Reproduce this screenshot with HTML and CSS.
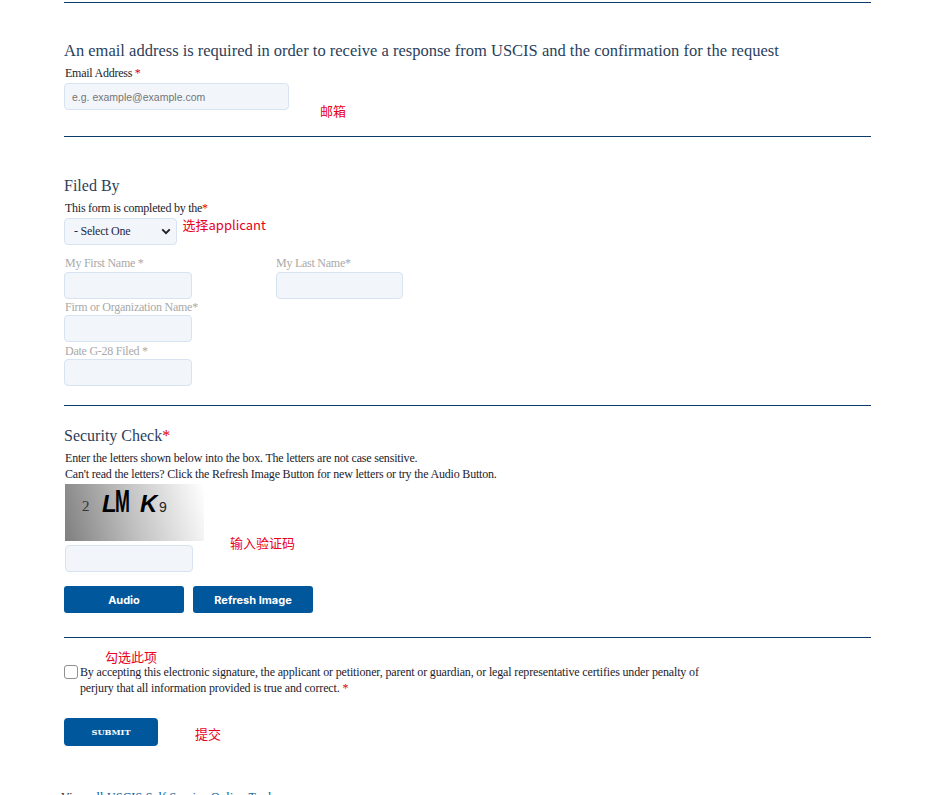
FILE: index.html
```html
<!DOCTYPE html>
<html lang="en">
<head>
<meta charset="utf-8">
<title>USCIS request form</title>
<link rel="stylesheet" href="styles.css">
</head>
<body>
<main class="page">
  <section class="sec sec-email">
    <h2 class="title title-email">An email address is required in order to receive a response from USCIS and the confirmation for the request</h2>
    <label class="lbl lbl-dark">Email Address <span class="req">*</span></label>
    <input class="field field-email" type="text" placeholder="e.g. example@example.com">
    <span class="note note-email">邮箱</span>
  </section>

  <section class="sec sec-filed">
    <h2 class="title">Filed By</h2>
    <label class="lbl lbl-dark lbl-by">This form is completed by the<span class="req">*</span></label>
    <div class="select-box"><span>- Select One</span>
      <svg class="chev" width="10" height="7" viewBox="0 0 12 8"><path d="M1.5 1.5 6 6l4.500-4.500" fill="none" stroke="#222" stroke-width="2.400"/></svg>
    </div>
    <span class="note note-select">选择applicant</span>
    <div class="name-row">
      <div class="col"><label class="lbl lbl-muted">My First Name *</label><div class="field field-sm"></div></div>
      <div class="col"><label class="lbl lbl-muted lbl-last">My Last Name*</label><div class="field field-last"></div></div>
    </div>
    <label class="lbl lbl-muted">Firm or Organization Name*</label>
    <div class="field field-sm"></div>
    <label class="lbl lbl-muted lbl-gap">Date G-28 Filed *</label>
    <div class="field field-sm"></div>
  </section>

  <section class="sec sec-check">
    <h2 class="title">Security Check<span class="req">*</span></h2>
    <p class="txt">Enter the letters shown below into the box. The letters are not case sensitive.</p>
    <p class="txt">Can't read the letters? Click the Refresh Image Button for new letters or try the Audio Button.</p>
    <div class="captcha"><span class="c-2">2</span><span class="c-l">L</span><span class="c-m">M</span><span class="c-k">K</span><span class="c-9">9</span></div>
    <div class="field field-captcha"></div>
    <span class="note note-captcha">输入验证码</span>
    <div class="btn-row">
      <button class="btn" type="button">Audio</button>
      <button class="btn" type="button">Refresh Image</button>
    </div>
  </section>

  <section class="sec sec-sign">
    <span class="note note-check">勾选此项</span>
    <div class="sign-row">
      <span class="box"></span>
      <p class="txt sign-text">By accepting this electronic signature, the applicant or petitioner, parent or guardian, or legal representative certifies under penalty of perjury that all information provided is true and correct. <span class="req">*</span></p>
    </div>
    <button class="submit" type="button">SUBMIT</button>
    <span class="note note-submit">提交</span>
    <p class="view">View <a href="#">all USCIS Self Service Online Tools</a></p>
  </section>
</main>
</body>
</html>
```
FILE: styles.css
```css
html, body { margin: 0; height: 795px; overflow: hidden; background: #fff; }
body { font-family: "Liberation Serif", serif; color: #1f2a44; }
.page { position: relative; margin: 0 73px 0 64px; padding-top: 2px; }
.sec { border-top: 1px solid #0b3a6b; }
.sec-email { height: 133px; }
.sec-filed { height: 268px; }
.sec-check { height: 231px; }
.title { margin: 0; font-weight: 400; font-size: 16px; line-height: 20px; color: #2b3f5c; }
.title-email { padding-top: 38px; font-size: 16.500px; }
.sec-filed .title { padding-top: 39px; }
.sec-check .title { padding-top: 20px; }
.lbl { display: block; padding-left: 1px; font-size: 12px; letter-spacing: -0.25px; line-height: 16px; }
.lbl-dark { color: #1b1b2e; margin-top: 5px; line-height: 14px; }
.lbl-by { margin-top: 5px; }
.lbl-muted { color: #a9a9a9; }
.name-row .lbl { line-height: 14px; margin-bottom: 2px; }
.lbl-last { padding-left: 0; }
.lbl-gap { margin-top: 1px; }
.req { color: #e00000; }
.field { box-sizing: border-box; display: block; background: #f2f6fb; border: 1px solid #d7e3f0; border-radius: 4px; }
.field-email { width: 225px; height: 27px; margin-top: 3px; padding: 0 7px; font: 10.500px "Liberation Sans", sans-serif; }
.field-email::placeholder { color: #757575; opacity: 1; }
.field-sm { width: 128px; height: 27px; }
.field-last { width: 127px; height: 27px; }
.name-row { display: flex; gap: 84px; margin-top: 11px; }
.select-box { box-sizing: border-box; width: 113px; height: 27px; margin-top: 3px; padding: 0 5px 0 9px; display: flex; align-items: center; justify-content: space-between; background: #f2f6fb; border: 1px solid #d7e3f0; border-radius: 4px; font-size: 12px; letter-spacing: -0.25px; color: #1f2a44; }
.txt { margin: 0; font-size: 12px; letter-spacing: -0.19px; line-height: 16px; color: #1b1b2e; padding-left: 1px; }
.sec-check .title + .txt { margin-top: 4px; }
.captcha { position: relative; width: 139px; height: 57px; margin: 2px 0 0 1px; background: linear-gradient(75deg, #7f7f7f 0%, #c4c4c4 50%, #ffffff 100%); color: #000; font-family: "Liberation Sans", sans-serif; }
.captcha span { position: absolute; line-height: 1; }
.c-2 { left: 17px; top: 15px; font-size: 15px; color: #333; font-family: "Liberation Serif", serif; }
.c-l { left: 37px; top: 8px; font-size: 24px; font-weight: 700; font-style: italic; }
.c-m { left: 50px; top: 1px; font-size: 32px; font-weight: 700; transform: scaleX(0.56); transform-origin: left; }
.c-k { left: 75px; top: 8px; font-size: 24px; font-weight: 700; font-style: italic; }
.c-9 { left: 94px; top: 16px; font-size: 14px; color: #222; }
.field-captcha { width: 128px; height: 27px; margin: 4px 0 0 1px; }
.btn-row { display: flex; gap: 9px; margin-top: 14px; }
.btn { width: 120px; height: 27px; padding: 0; border: 0; border-radius: 3px; background: #00579c; color: #fff; font: 700 11px Inter, "Liberation Sans", sans-serif; }
.sec-sign { position: relative; padding-top: 26px; }
.sign-row { display: flex; gap: 2px; }
.box { box-sizing: border-box; flex: none; width: 14px; height: 14px; margin-top: 1px; border: 1px solid #8f8f8f; border-radius: 3px; background: #fff; }
.sign-row .txt { padding: 0; letter-spacing: -0.15px; }
.sign-text { width: 640px; }
.submit { display: block; width: 94px; height: 28px; margin-top: 22px; padding: 0; border: 0; border-radius: 4px; background: #00579c; color: #fff; font: 700 8.200px "DejaVu Serif", serif; }
.view { margin: 44px 0 0 -3px; font-size: 12px; line-height: 14px; color: #1f2a44; letter-spacing: 0.3px; }
.view a { color: #00579c; text-decoration: none; }
.note { position: absolute; font-family: "Noto Sans CJK SC", sans-serif; font-size: 13px; line-height: 16px; color: #e8001c; }
.note-email { left: 256px; top: 103px; }
.note-select { left: 118.500px; top: 217px; }
.note-captcha { left: 166px; top: 535px; }
.note-check { left: 41px; top: 13px; line-height: 12px; }
.note-submit { left: 131px; top: 88px; }
```
